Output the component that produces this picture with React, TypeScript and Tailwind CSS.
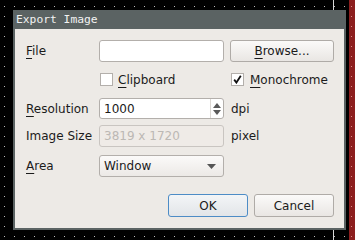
import React from 'react';

const font = "font-['DejaVu_Sans',sans-serif]";

function Mn({ k, rest }: { k: string; rest: string }) {
  return (
    <span>
      <span className="underline decoration-1 underline-offset-[3px]">{k}</span>
      {rest}
    </span>
  );
}

function Field({ children, disabled }: { children?: React.ReactNode; disabled?: boolean }) {
  return (
    <div
      className={`h-[22px] w-[125px] rounded-[3px] border pl-[4px] flex items-center ${
        disabled ? 'border-[#c9c5c1] bg-[#efebe7] text-[#bcb8b4]' : 'border-[#b3afab] bg-white text-[#1b1b1b]'
      }`}
    >
      {children}
    </div>
  );
}

function Button({ children, primary, className = '' }: { children: React.ReactNode; primary?: boolean; className?: string }) {
  return (
    <div
      className={`flex items-center justify-center rounded-[3px] border ${
        primary
          ? 'border-[#4d8cc6] bg-[linear-gradient(#f3f5f7,#e2e5e8)]'
          : 'border-[#afaba7] bg-[linear-gradient(#fbfaf9,#e9e6e3)]'
      } ${className}`}
    >
      {children}
    </div>
  );
}

function Check({ checked }: { checked?: boolean }) {
  return (
    <div className="w-[13px] h-[13px] border border-[#b3afab] bg-white flex items-center justify-center">
      {checked && (
        <svg width="9" height="9" viewBox="0 0 9 9">
          <path d="M1.2 4.6 L3.4 7.6 L7.8 0.8" fill="none" stroke="#111" strokeWidth="1.8" />
        </svg>
      )}
    </div>
  );
}

export default function App() {
  return (
    <div className="relative w-[355px] h-[240px] overflow-hidden bg-black bg-[radial-gradient(circle_at_0.5px_0.5px,#bdbdbd_0.6px,transparent_0.8px)] bg-[size:10px_10px] bg-[position:4px_6px]">
      <div className="absolute left-[333px] top-0 w-px h-full bg-[#d6d6d6]" />
      <div className="absolute right-0 top-0 w-[6px] h-full bg-[#8c1e1e] bg-[radial-gradient(circle_at_0.5px_0.5px,#d98a8a_0.6px,transparent_0.8px)] bg-[size:10px_10px] bg-[position:2px_6px]" />

      <div className={`relative ml-[13px] mt-[10px] w-[333px] h-[220px] bg-[#5b6363] flex flex-col ${font} text-[12px] text-[#1b1b1b]`}>
        <div className="h-[19px] pl-[3px] pt-[2px] font-['DejaVu_Sans_Mono',monospace] text-[11.3px] leading-[15px] text-[#f2f2f2]">
          Export Image
        </div>
        <div className="ml-[2px] w-[329px] h-[199px] bg-[#edeae6] pt-[11px] pl-[11px] flex flex-col">
          <div className="flex items-center h-[22px]">
            <div className="w-[73px]"><Mn k="F" rest="ile" /></div>
            <Field />
            <Button className="ml-[6px] w-[104px] h-[22px]"><Mn k="B" rest="rowse..." /></Button>
          </div>

          <div className="flex items-center h-[13px] mt-[11px]">
            <div className="w-[74px]" />
            <Check />
            <div className="ml-[5px] w-[113px]"><Mn k="C" rest="lipboard" /></div>
            <Check checked />
            <div className="ml-[6px]"><Mn k="M" rest="onochrome" /></div>
          </div>

          <div className="flex items-center h-[21px] mt-[12px]">
            <div className="w-[73px]"><Mn k="R" rest="esolution" /></div>
            <div className="h-[21px] w-[125px] rounded-[3px] border border-[#b3afab] bg-white flex items-center">
              <div className="flex-1 pl-[4px]">1000</div>
              <div className="w-[13px] h-full border-l border-[#dcd8d4] flex flex-col items-center justify-center gap-[2px]">
                <svg width="8" height="5" viewBox="0 0 8 5"><path d="M0 5 L4 0 L8 5 Z" fill="#5a5a5a" /></svg>
                <svg width="8" height="5" viewBox="0 0 8 5"><path d="M0 0 L4 5 L8 0 Z" fill="#5a5a5a" /></svg>
              </div>
            </div>
            <div className="ml-[7px]">dpi</div>
          </div>

          <div className="flex items-center h-[22px] mt-[6px]">
            <div className="w-[73px]">Image Size</div>
            <Field disabled>3819 x 1720</Field>
            <div className="ml-[7px]">pixel</div>
          </div>

          <div className="flex items-center h-[22px] mt-[8px]">
            <div className="w-[73px]"><Mn k="A" rest="rea" /></div>
            <div className="h-[22px] w-[125px] rounded-[3px] border border-[#b3afab] bg-[linear-gradient(#fbfaf9,#ece9e6)] flex items-center pl-[4px] pr-[7px]">
              <div className="flex-1">Window</div>
              <svg width="9" height="5" viewBox="0 0 9 5"><path d="M0 0 L9 0 L4.5 5 Z" fill="#555" /></svg>
            </div>
          </div>

          <div className="flex justify-end gap-[6px] mt-[17px] pr-[10px]">
            <Button primary className="w-[80px] h-[23px]">OK</Button>
            <Button className="w-[80px] h-[23px]">Cancel</Button>
          </div>
        </div>
      </div>
    </div>
  );
}
